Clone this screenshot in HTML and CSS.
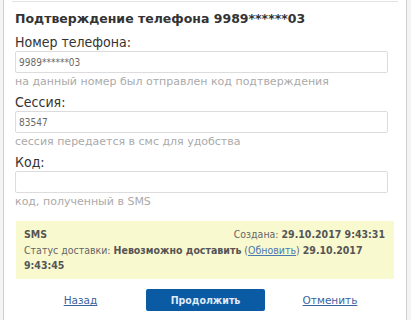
FILE: index.html
```html
<!DOCTYPE html>
<html lang="ru">
<head>
  <meta charset="utf-8">
  <title>Подтверждение телефона</title>
  <link rel="stylesheet" href="styles.css">
</head>
<body>
  <div id="page">
    <div id="top-edge"></div>
    <main id="confirm-box">
      <h1 id="header">Подтверждение телефона 9989******03</h1>

      <div class="field">
        <label class="field-label">Номер телефона:</label>
        <input type="text" class="field-input" value="9989******03" readonly>
        <div class="field-hint">на данный номер был отправлен код подтверждения</div>
      </div>

      <div class="field">
        <label class="field-label">Сессия:</label>
        <input type="text" class="field-input" value="83547" readonly>
        <div class="field-hint">сессия передается в смс для удобства</div>
      </div>

      <div class="field">
        <label class="field-label">Код:</label>
        <input type="text" class="field-input" value="">
        <div class="field-hint">код, полученный в SMS</div>
      </div>

      <div id="sms-info">
        <div class="sms-row">
          <b>SMS</b>
          <span>Создана: <b>29.10.2017 9:43:31</b></span>
        </div>
        <div class="sms-status">Статус доставки: <b>Невозможно доставить</b> (<a href="#">Обновить</a>) <b>29.10.2017</b> <b>9:43:45</b></div>
      </div>

      <div id="actions">
        <a href="#" class="action-link">Назад</a>
        <button type="button" class="button">Продолжить</button>
        <a href="#" class="action-link">Отменить</a>
      </div>
    </main>
  </div>
</body>
</html>
```

FILE: styles.css
```css
html {
  height: 100%;
}

body {
  margin: 0;
  font-family: "DejaVu Sans", Verdana, sans-serif;
  background-color: #f4f4f4;
  color: #333;
}

#page {
  width: 402px;
  margin-left: 3px;
  background-color: white;
  border-left: 1px solid #d0d0d0;
  border-right: 1px solid #d0d0d0;
  padding: 0 0 12px 0;
}

#top-edge {
  height: 1px;
  margin: 0 8px 0 8px;
  border-bottom: 1px solid #e2e2e2;
}

#confirm-box {
  padding: 8px 10px 0 11px;
}

#header {
  margin: 0;
  font-size: 12.5px;
  line-height: 17px;
  font-weight: bold;
  color: #333;
}

.field {
  display: flex;
  flex-direction: column;
  margin-top: 6px;
}

.field:first-of-type {
  margin-top: 7px;
}

.field-label {
  font-family: "DejaVu Sans Condensed", "DejaVu Sans", sans-serif;
  font-size: 14px;
  line-height: 16px;
  color: #333;
}

.field-input {
  width: 373px;
  height: 22px;
  box-sizing: border-box;
  margin: 1px 0 0 0;
  padding: 0 3px;
  border: 1px solid #dcdcdc;
  border-radius: 2px;
  font-family: "DejaVu Sans Condensed", "DejaVu Sans", sans-serif;
  font-size: 10px;
  color: #6a6a6a;
  outline: none;
}

.field-hint {
  margin-top: 2px;
  font-size: 11px;
  line-height: 13px;
  color: #aaa;
}

#sms-info {
  margin: 13px 0 0 1px;
  padding: 6px 9px 6px 8px;
  width: 378px;
  box-sizing: border-box;
  background-color: #f9f9d0;
  font-family: "DejaVu Sans Condensed", "DejaVu Sans", sans-serif;
  font-size: 10.5px;
  line-height: 15px;
  color: #666;
}

#sms-info b {
  color: #555;
}

.sms-row {
  display: flex;
  justify-content: space-between;
  margin-bottom: 1px;
}

.sms-status a {
  color: #4a78b0;
}

#actions {
  display: grid;
  grid-template-columns: 131px 119px 130px;
  align-items: center;
  margin-top: 10px;
}

.action-link {
  justify-self: center;
  font-size: 10.5px;
  color: #3a64a0;
}

.button {
  height: 22px;
  border: none;
  border-radius: 2px;
  background-color: #0b5aa4;
  color: #dfeaf6;
  font-family: "DejaVu Sans Condensed", "DejaVu Sans", sans-serif;
  font-size: 10.5px;
  font-weight: bold;
  cursor: pointer;
}
```
